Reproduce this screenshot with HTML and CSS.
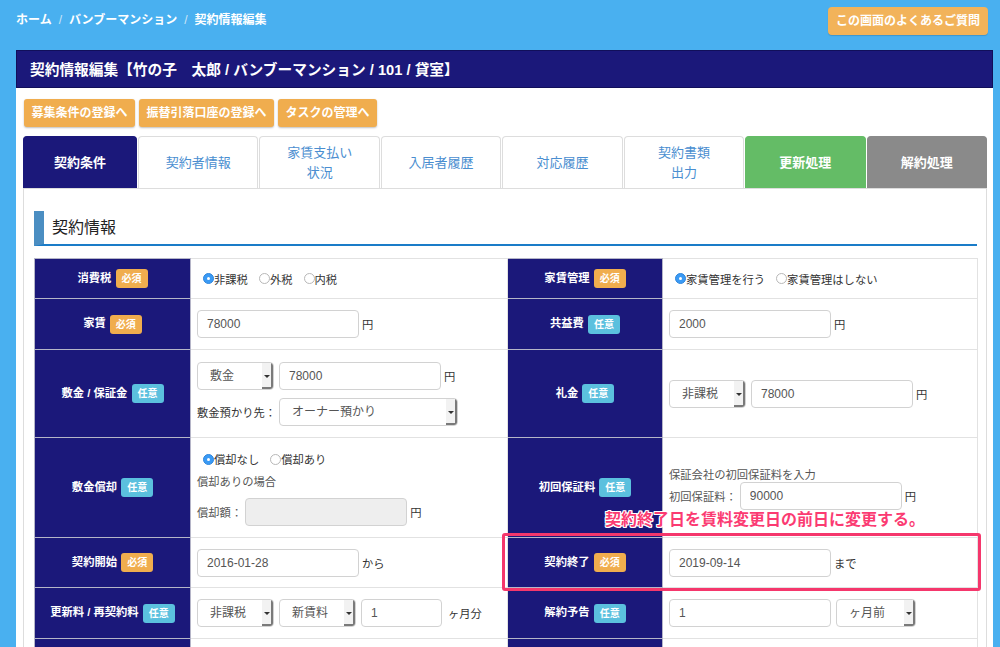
FILE: index.html
```html
<!DOCTYPE html>
<html lang="ja">
<head>
<meta charset="utf-8">
<title>契約情報編集</title>
<link rel="stylesheet" href="styles.css">
</head>
<body>
<div class="topbar">
  <div class="crumbs"><span>ホーム</span><span class="sep">/</span><span>バンブーマンション</span><span class="sep">/</span><span class="cur">契約情報編集</span></div>
  <a class="faq">この画面のよくあるご質問</a>
</div>
<div class="panel">
  <div class="panel-head">契約情報編集【竹の子　太郎 / バンブーマンション / 101 / 貸室】</div>
  <div class="panel-body">
    <div class="btns">
      <a class="obtn">募集条件の登録へ</a>
      <a class="obtn">振替引落口座の登録へ</a>
      <a class="obtn">タスクの管理へ</a>
    </div>
    <div class="tabs">
      <div class="tab first active">契約条件</div>
      <div class="tab">契約者情報</div>
      <div class="tab">家賃支払い<br>状況</div>
      <div class="tab">入居者履歴</div>
      <div class="tab">対応履歴</div>
      <div class="tab">契約書類<br>出力</div>
      <div class="tab green">更新処理</div>
      <div class="tab grey">解約処理</div>
    </div>
    <div class="tab-content">
      <h2 class="sec-title">契約情報</h2>
      <div class="table-wrap">
        <table class="form-table">
          <colgroup><col class="c-lab"><col class="c-val"><col class="c-lab2"><col class="c-val2"></colgroup>
          <tr class="r1">
            <th>消費税 <span class="badge req">必須</span></th>
            <td><div class="row"><label class="rad"><span class="radio on"></span>非課税</label><label class="rad"><span class="radio"></span>外税</label><label class="rad"><span class="radio"></span>内税</label></div></td>
            <th>家賃管理 <span class="badge req">必須</span></th>
            <td><div class="row"><label class="rad"><span class="radio on"></span>家賃管理を行う</label><label class="rad"><span class="radio"></span>家賃管理はしない</label></div></td>
          </tr>
          <tr class="r2">
            <th>家賃 <span class="badge req">必須</span></th>
            <td><div class="row"><input class="inp" type="text" value="78000"><span class="unit">円</span></div></td>
            <th>共益費 <span class="badge opt">任意</span></th>
            <td><div class="row"><input class="inp" type="text" value="2000"><span class="unit">円</span></div></td>
          </tr>
          <tr class="r3">
            <th>敷金 / 保証金 <span class="badge opt">任意</span></th>
            <td>
              <div class="row"><span class="sel w77"><span class="st">敷金</span><span class="sa"></span></span><input class="inp" type="text" value="78000"><span class="unit">円</span></div>
              <div class="row mt8"><span class="lbl">敷金預かり先：</span><span class="sel w179"><span class="st">オーナー預かり</span><span class="sa"></span></span></div>
            </td>
            <th>礼金 <span class="badge opt">任意</span></th>
            <td><div class="row"><span class="sel w77"><span class="st">非課税</span><span class="sa"></span></span><input class="inp" type="text" value="78000"><span class="unit">円</span></div></td>
          </tr>
          <tr class="r4">
            <th>敷金償却 <span class="badge opt">任意</span></th>
            <td>
              <div class="row h20"><label class="rad"><span class="radio on"></span>償却なし</label><label class="rad"><span class="radio"></span>償却あり</label></div>
              <div class="line h24 muted">償却ありの場合</div>
              <div class="row mt5"><span class="lbl muted">償却額：</span><input class="inp dis" type="text" value="" disabled><span class="unit">円</span></div>
            </td>
            <th>初回保証料 <span class="badge opt">任意</span></th>
            <td>
              <div class="line h17 muted">保証会社の初回保証料を入力</div>
              <div class="row"><span class="lbl muted">初回保証料：</span><input class="inp" type="text" value="90000"><span class="unit">円</span></div>
            </td>
          </tr>
          <tr class="r5">
            <th>契約開始 <span class="badge req">必須</span></th>
            <td><div class="row"><input class="inp" type="text" value="2016-01-28"><span class="unit">から</span></div></td>
            <th>契約終了 <span class="badge req">必須</span></th>
            <td><div class="row"><input class="inp" type="text" value="2019-09-14"><span class="unit">まで</span></div></td>
          </tr>
          <tr class="r6">
            <th>更新料 / 再契約料 <span class="badge opt">任意</span></th>
            <td><div class="row"><span class="sel w77"><span class="st">非課税</span><span class="sa"></span></span><span class="sel w77"><span class="st">新賃料</span><span class="sa"></span></span><input class="inp w81" type="text" value="1"><span class="unit wide">ヶ月分</span></div></td>
            <th>解約予告 <span class="badge opt">任意</span></th>
            <td><div class="row"><input class="inp" type="text" value="1"><span class="sel w80"><span class="st">ヶ月前</span><span class="sa"></span></span></div></td>
          </tr>
          <tr class="r7">
            <th></th><td></td><th></th><td></td>
          </tr>
        </table>
        <div class="note">契約終了日を賃料変更日の前日に変更する。</div>
        <div class="note-box"></div>
      </div>
    </div>
  </div>
</div>
</body>
</html>
```

FILE: styles.css
```css
* { box-sizing: border-box; }
html, body { margin: 0; padding: 0; }
body {
  background: #49b0f0;
  font-family: "Liberation Sans", "Noto Sans CJK JP", sans-serif;
  font-size: 11.3px;
  color: #333;
  overflow: hidden;
}
.topbar {
  height: 50px;
  display: flex;
  justify-content: space-between;
  align-items: flex-start;
  padding: 0 12px 0 16px;
}
.crumbs {
  color: #fff;
  font-weight: bold;
  font-size: 12px;
  line-height: 16px;
  padding-top: 12px;
}
.crumbs .sep { color: #cfe6f7; margin: 0 7px; font-weight: normal; }
.faq {
  margin-top: 7px;
  height: 28px;
  line-height: 28px;
  padding: 0 8px;
  background: #f2b35a;
  color: #fff;
  font-weight: bold;
  font-size: 12px;
  border-radius: 4px;
  box-shadow: 0 1px 1px rgba(0,0,0,0.15);
}
.panel {
  margin: 0 7px 0 16px;
  background: #fff;
}
.panel-head {
  height: 38px;
  line-height: 38px;
  background: #1b187a;
  border: 1px solid #110f5a;
  color: #fff;
  font-weight: bold;
  font-size: 14.7px;
  padding-left: 13px;
}
.panel-body {
  padding: 11px 6px 0 7px;
}
.btns { display: flex; gap: 4px; padding-left: 1px; }
.obtn {
  height: 28px;
  line-height: 28px;
  padding: 0 7.5px;
  background: #f0ad4e;
  color: #fff;
  font-weight: bold;
  font-size: 12px;
  border-radius: 3px;
  box-shadow: 0 1px 2px rgba(0,0,0,0.25);
}
.tabs {
  display: flex;
  gap: 1px;
  margin-top: 9px;
  height: 52px;
}
.tab {
  flex: 1 1 0;
  min-width: 0;
  border: 1px solid #ddd;
  border-bottom: none;
  border-radius: 4px 4px 0 0;
  background: #fff;
  color: #4a8ed0;
  font-size: 13px;
  line-height: 20px;
  text-align: center;
  display: flex;
  align-items: center;
  justify-content: center;
}
.tab.first { flex: 0 0 114px; }
.tab.active { background: #1b187a; border-color: #1b187a; color: #fff; font-weight: bold; }
.tab.green { background: #64bc66; border-color: #64bc66; color: #fff; font-weight: bold; }
.tab.grey { background: #8a8a8a; border-color: #8a8a8a; color: #fff; font-weight: bold; }
.tab-content {
  border: 1px solid #ddd;
  padding: 22px 9px 0 10px;
  height: 470px;
}
.sec-title {
  margin: 0;
  height: 35px;
  line-height: 33px;
  font-size: 16px;
  font-weight: normal;
  color: #222;
  border-left: 10px solid #4b8ec2;
  border-bottom: 2px solid #1a7cc8;
  padding-left: 8px;
}
.table-wrap {
  position: relative;
  margin-top: 12px;
}
.form-table {
  width: 943px;
  border-collapse: collapse;
  table-layout: fixed;
}
.c-lab { width: 156px; }
.c-val { width: 317px; }
.c-lab2 { width: 155px; }
.c-val2 { width: 315px; }
.form-table th {
  background: #1b187a;
  color: #fff;
  font-weight: bold;
  font-size: 11.3px;
  text-align: center;
  border: 1px solid #b5b5c8;
  padding: 0;
  white-space: nowrap;
}
.form-table td {
  border: 1px solid #e2e2e2;
  padding: 0 6px;
  vertical-align: middle;
}
.r1 { height: 40px; }
.r2 { height: 51px; }
.r3 { height: 88px; }
.r4 { height: 100px; }
.r5 { height: 50px; }
.r6 { height: 51px; }
.r7 { height: 50px; }
.badge {
  display: inline-block;
  height: 19px;
  line-height: 19px;
  padding: 0 6px;
  border-radius: 3px;
  font-size: 10px;
  font-weight: bold;
  color: #fff;
  vertical-align: middle;
  margin-left: 1px;
}
.badge.req { background: #f0ad4e; }
.badge.opt { background: #5bc0de; }
.row { display: flex; align-items: center; }
.mt8 { margin-top: 8px; }
.mt5 { margin-top: 5px; }
.h20 { height: 20px; }
.line { display: flex; align-items: center; }
.h24 { height: 24px; }
.h17 { height: 17px; }
.muted { color: #555; }
.rad {
  display: inline-flex;
  align-items: center;
  margin-left: 6px;
  margin-right: 5px;
  color: #333;
}
.radio {
  width: 11px;
  height: 11px;
  border-radius: 50%;
  border: 1px solid #b8b8b8;
  background: #fff;
  display: inline-block;
  position: relative;
}
.radio.on { background: #3a9af5; border-color: #2f86dc; }
.radio.on::after {
  content: "";
  position: absolute;
  left: 3px; top: 3px;
  width: 3px; height: 3px;
  border-radius: 50%;
  background: #fff;
}
.inp {
  width: 162px;
  height: 28px;
  border: 1px solid #d2d2d2;
  border-radius: 4px;
  padding: 0 9px;
  font-family: inherit;
  font-size: 12px;
  color: #555;
  background: #fff;
  margin: 0;
  outline: none;
}
.inp.dis { background: #eee; }
.inp.w81 { width: 81px; }
.unit { margin-left: 3px; color: #333; }
.unit.wide { margin-left: 6px; }
.lbl { white-space: nowrap; margin-right: 3px; }
.sel {
  display: inline-flex;
  height: 28px;
  border: 1px solid #d2d2d2;
  border-radius: 4px;
  background: #fff;
  margin-right: 5px;
  overflow: hidden;
}
.sel.w77 { width: 77px; }
.sel.w80 { width: 80px; margin-left: 5px; }
.sel.w179 { width: 179px; }
.st {
  flex: 1;
  padding-left: 12px;
  line-height: 26px;
  color: #555;
  white-space: nowrap;
  font-size: 12px;
}
.sa {
  width: 11px;
  position: relative;
  background: #f2f2f2;
  box-shadow: inset -2px -2px 0 #7a7a7a;
}
.sa::after {
  content: "";
  position: absolute;
  left: 2px;
  top: 12px;
  border-left: 3px solid transparent;
  border-right: 3px solid transparent;
  border-top: 3px solid #333;
}
.note {
  position: absolute;
  left: 571px;
  top: 252px;
  font-size: 16px;
  line-height: 20px;
  font-weight: bold;
  color: #fb3b72;
  white-space: nowrap;
  text-shadow: 1px 0 0 #fff, -1px 0 0 #fff, 0 1px 0 #fff, 0 -1px 0 #fff, 1px 1px 0 #fff, -1px -1px 0 #fff, 1px -1px 0 #fff, -1px 1px 0 #fff;
}
.note-box {
  position: absolute;
  left: 468px;
  top: 275px;
  width: 479px;
  height: 58px;
  border: 3px solid #f5376c;
  border-radius: 3px;
}
```
